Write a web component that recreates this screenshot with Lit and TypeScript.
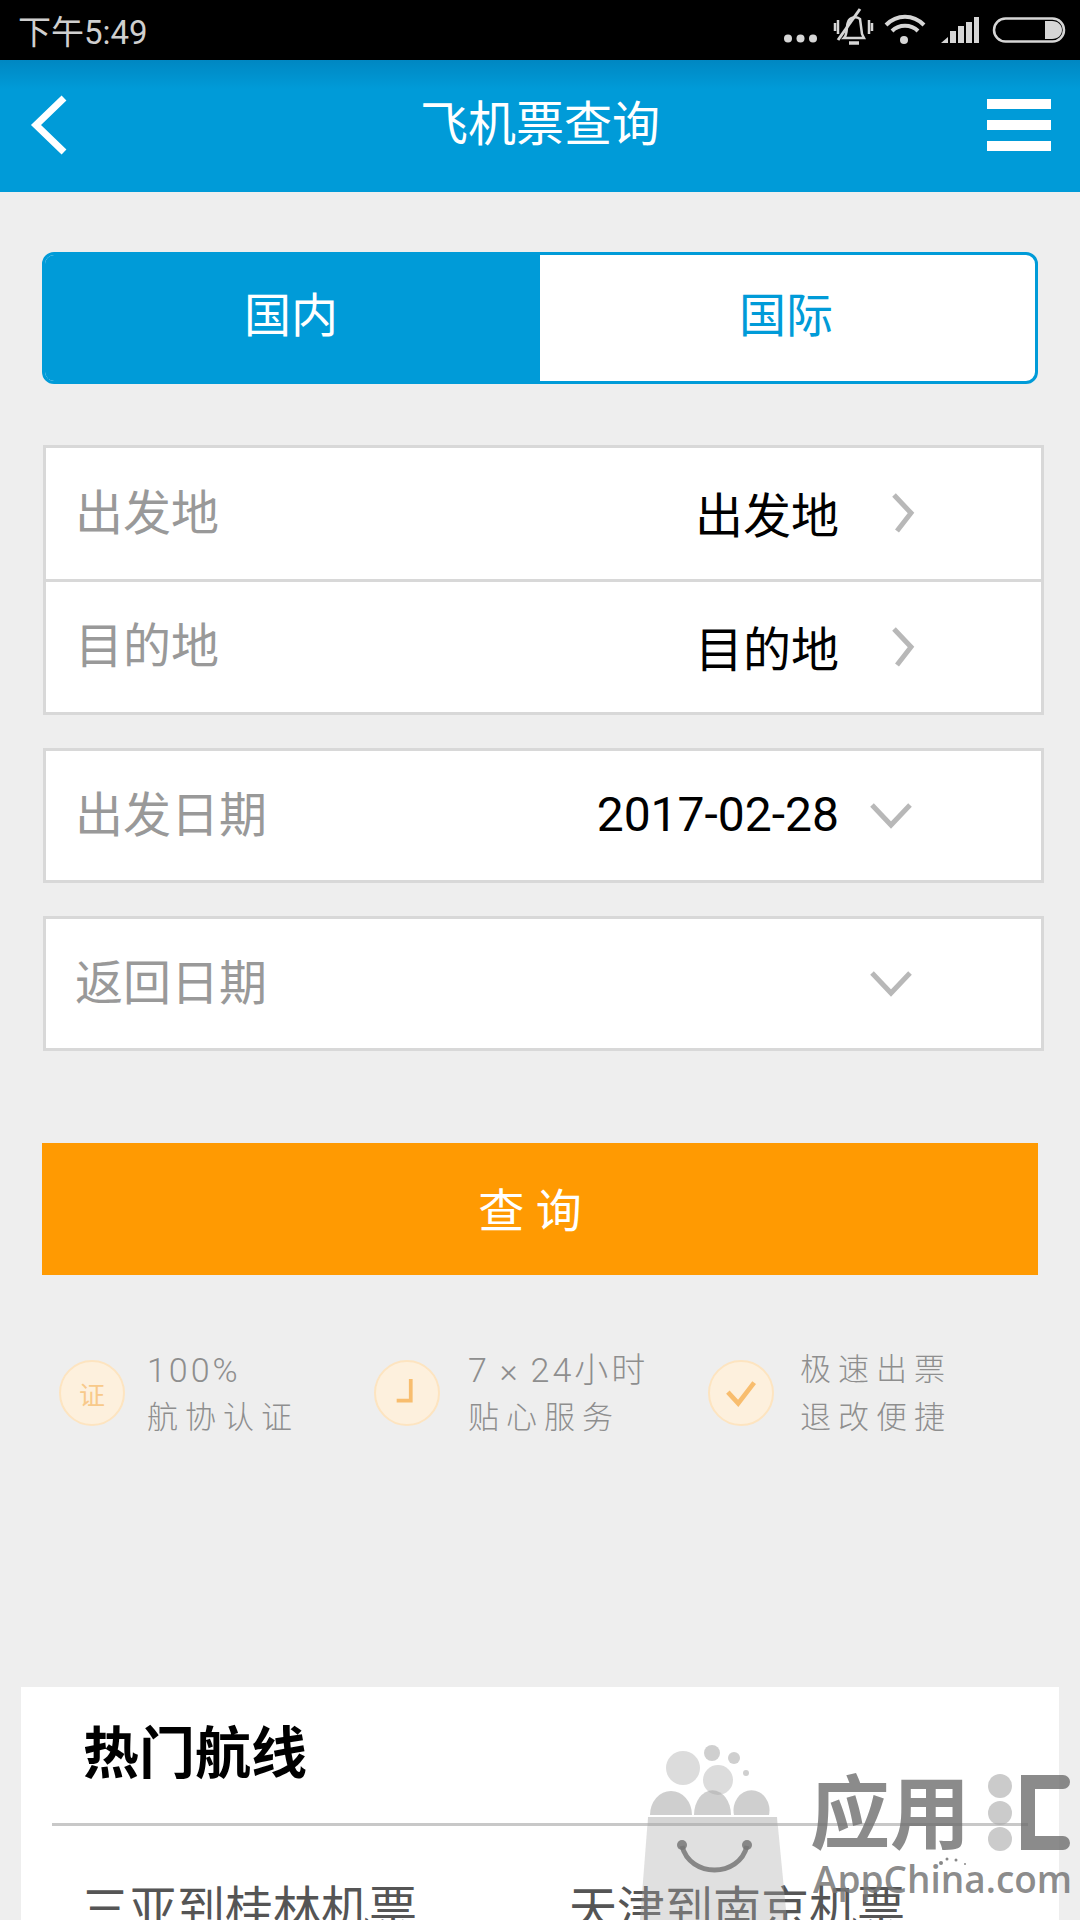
import { LitElement, css, html, svg, type TemplateResult } from 'lit';
import { customElement } from 'lit/decorators.js';
import { classMap } from 'lit/directives/class-map.js';

const chevronRight = html`<svg class="chevron-right" viewBox="0 0 26 42">
  <path d="M4 3 L21 21 L7 39" fill="none" stroke="#b8b8b8" stroke-width="5" />
</svg>`;

const chevronDown = html`<svg class="chevron-down" viewBox="0 0 44 28">
  <path d="M3 4 L22 24 L41 4" fill="none" stroke="#b8b8b8" stroke-width="5" />
</svg>`;

const statusIcons = html`<svg class="status-icons" viewBox="760 0 320 60">
  <g fill="#d6d6d6">
    <circle cx="788" cy="38.500" r="4" />
    <circle cx="800.500" cy="38.500" r="4" />
    <circle cx="813" cy="38.500" r="4" />
  </g>
  <g fill="none" stroke="#d6d6d6" stroke-width="2.500">
    <path d="M844 38 C848 34 846 26 848 22 C850 17 856 16 860 19 L862 34 L864 38 Z" />
    <path d="M838 20 V34 M835 23 V31 M869 20 V34 M872 23 V31" />
    <path d="M838 40 L860 9" stroke-width="3" />
    <path d="M849 43 H859" stroke-width="3.500" />
  </g>
  <g fill="none" stroke="#d6d6d6" stroke-width="4">
    <path d="M886 25 C897 14 913 14 924 25" />
    <path d="M892 31 C899 24 911 24 918 31" />
  </g>
  <circle cx="904" cy="40" r="4" fill="#d6d6d6" />
  <g fill="#d6d6d6">
    <path d="M941 43 L948 37 V43 Z" />
    <rect x="950" y="31" width="6" height="12" />
    <rect x="958" y="26" width="6" height="17" />
    <rect x="966" y="22" width="6" height="21" />
    <rect x="974" y="17" width="5" height="26" />
  </g>
  <rect x="994" y="18.500" width="70" height="23" rx="11.500" fill="none" stroke="#d6d6d6" stroke-width="2.500" />
  <path d="M1045 21 H1052 C1058 21 1062 25 1062 30 C1062 35 1058 39 1052 39 H1045 Z" fill="#d6d6d6" />
</svg>`;

// the market's stamp, laid over the lower right corner of the screenshot
const watermark = svg`
  <path d="M648 1817 H777 L787 1920 H640 Z" fill="#a8a8a8" fill-opacity="0.36" />
  <rect x="648" y="1817" width="129" height="9" fill="#a8a8a8" fill-opacity="0.18" />
  <g fill="#a8a8a8" fill-opacity="0.4">
    <circle cx="683" cy="1768" r="17" />
    <circle cx="718" cy="1780" r="15" />
  </g>
  <g fill="#a8a8a8" fill-opacity="0.55">
    <path d="M650 1815 A21 24 0 1 1 692 1815 Z" />
    <path d="M694 1815 A18 24 0 1 1 731 1815 Z" />
    <path d="M734 1815 A18 20 0 1 1 769 1815 Z" />
    <circle cx="712" cy="1753" r="8" />
    <circle cx="734" cy="1758" r="6" />
    <circle cx="746" cy="1773" r="3" />
  </g>
  <path d="M682 1846 C690 1878 739 1878 747 1846" fill="none" stroke="#777" stroke-opacity="0.85" stroke-width="5" />
  <circle cx="682" cy="1845" r="5" fill="#777" fill-opacity="0.85" />
  <circle cx="747" cy="1845" r="5" fill="#777" fill-opacity="0.85" />
  <text class="mark-cn" x="810" y="1842">应用</text>
  <g fill="#a8a8a8" fill-opacity="0.6">
    <circle cx="1000" cy="1786" r="12" />
    <circle cx="1000" cy="1813" r="12" />
    <circle cx="1000" cy="1839" r="12" />
  </g>
  <path d="M1063 1782 H1028 V1843 H1063" fill="none" stroke="#6e6e6e" stroke-opacity="0.8" stroke-width="14" stroke-linecap="round" />
  <text class="mark-en" x="813" y="1893">AppChina.com</text>
  <g fill="#888">
    <circle cx="941" cy="1863" r="2" />
    <circle cx="947" cy="1859" r="1.500" />
    <circle cx="956" cy="1860" r="1.500" />
    <circle cx="965" cy="1864" r="1" />
  </g>
`;

interface Feature {
  icon: TemplateResult;
  lines: [string, string];
  tight?: boolean;
}

const features: Feature[] = [
  { icon: html`<span class="badge-text">证</span>`, lines: ['100%', '航协认证'], tight: true },
  {
    icon: html`<svg viewBox="0 0 66 66" class="badge-icon">
      <path d="M37 18 V41 H22" fill="none" stroke="#f8bd6e" stroke-width="4" />
    </svg>`,
    lines: ['7\u2009×\u200924小时', '贴心服务'],
    tight: true,
  },
  {
    icon: html`<svg viewBox="0 0 66 66" class="badge-icon">
      <path d="M19 32 L30 44 L47 22" fill="none" stroke="#f8bd6e" stroke-width="5" />
    </svg>`,
    lines: ['极速出票', '退改便捷'],
  },
];

@customElement('app-root')
export class AppRoot extends LitElement {
  private renderRow(label: string, value: string, icon: TemplateResult): TemplateResult {
    return html`<div class="row">
      <span class="label">${label}</span>
      <span class="value">${value}</span>
      <span class="row-icon">${icon}</span>
    </div>`;
  }

  render(): TemplateResult {
    return html`
      <div class="status-bar">
        <span class="time">下午5:49</span>
        ${statusIcons}
      </div>
      <header class="app-bar">
        <div class="bar-side">
          <svg class="back" viewBox="0 0 40 62">
            <path d="M35 4 L7 31 L35 58" fill="none" stroke="#fff" stroke-width="7" />
          </svg>
        </div>
        <h1>飞机票查询</h1>
        <div class="bar-side menu"><i></i><i></i><i></i></div>
      </header>

      <main class="form">
        <div class="tabs">
          <div class="tab active">国内</div>
          <div class="tab">国际</div>
        </div>

        <div class="box first">
          ${this.renderRow('出发地', '出发地', chevronRight)}
          ${this.renderRow('目的地', '目的地', chevronRight)}
        </div>
        <div class="box">${this.renderRow('出发日期', '2017-02-28', chevronDown)}</div>
        <div class="box">${this.renderRow('返回日期', '', chevronDown)}</div>

        <button class="search">查 询</button>

        <div class="features">
          ${features.map(
            (f) => html`<div class="feature">
              <div class="badge">${f.icon}</div>
              <div class="feature-text">
                <div class=${classMap({ tight: !!f.tight })}>${f.lines[0]}</div>
                <div>${f.lines[1]}</div>
              </div>
            </div>`,
          )}
        </div>
      </main>

      <section class="hot">
        <h2>热门航线</h2>
        <div class="routes">
          <span>三亚到桂林机票</span>
          <span>天津到南京机票</span>
        </div>
      </section>

      <svg class="watermark" viewBox="0 0 1080 1920">${watermark}</svg>
    `;
  }

  static styles = css`
    :host {
      display: block;
      position: relative;
      width: 1080px;
      height: 1920px;
      overflow: hidden;
      background: #eeeeee;
      font-family: 'Roboto', 'Noto Sans CJK SC', sans-serif;
    }

    .status-bar {
      height: 60px;
      background: #000;
      display: flex;
      align-items: center;
      justify-content: space-between;
      padding-left: 18px;
    }

    .time {
      font-size: 33px;
      color: #cfcfcf;
    }

    .status-icons {
      width: 320px;
      height: 60px;
    }

    .app-bar {
      height: 132px;
      background: linear-gradient(#0087c2, #009bd8 22%);
      display: flex;
      align-items: center;
      justify-content: space-between;
      padding: 0 29px;
    }

    .app-bar h1 {
      margin: -2px 0 0 0;
      font-size: 48px;
      font-weight: 400;
      color: #fff;
      line-height: 1;
    }

    .bar-side {
      width: 64px;
    }

    .back {
      display: block;
      width: 40px;
      height: 62px;
      margin-top: -2px;
    }

    .menu {
      display: flex;
      flex-direction: column;
      gap: 11px;
      margin-top: -2px;
    }

    .menu i {
      display: block;
      height: 10px;
      background: #fff;
    }

    .form {
      padding: 60px 0 0 42px;
    }

    .tabs {
      width: 996px;
      height: 132px;
      box-sizing: border-box;
      display: flex;
      border: 3px solid #009bd8;
      border-radius: 12px;
      overflow: hidden;
      background: #fff;
    }

    .tab {
      flex: 1;
      display: flex;
      align-items: center;
      justify-content: center;
      padding: 0 3px 14px 0;
      font-size: 47px;
      color: #009bd8;
    }

    .tab.active {
      flex: 0 0 495px;
      box-sizing: border-box;
      background: #009bd8;
      color: #fff;
    }

    .box {
      width: 1001px;
      margin: 33px 0 0 1px;
      box-sizing: border-box;
      border: 3px solid #d8d8d8;
      background: #fff;
    }

    .box.first {
      margin-top: 61px;
    }

    .row {
      height: 129px;
      display: flex;
      align-items: center;
      padding-left: 29px;
    }

    .box.first .row {
      height: 130.5px;
    }

    .row + .row {
      border-top: 3px solid #d8d8d8;
    }

    .label {
      flex: 1;
      font-size: 48px;
      color: #999;
      margin-top: -9px;
    }

    .value {
      font-size: 48px;
      color: #000;
      margin-top: -2px;
    }

    .row-icon {
      width: 202px;
      height: 50px;
      display: flex;
      align-items: center;
      padding-left: 30px;
      box-sizing: border-box;
    }

    .chevron-right {
      width: 26px;
      height: 42px;
      margin-left: 21px;
    }

    .chevron-down {
      width: 44px;
      height: 28px;
      margin-top: -2px;
    }

    .search {
      display: block;
      width: 996px;
      height: 132px;
      margin-top: 92px;
      padding: 0 20px 4px 0;
      border: none;
      background: #ff9a02;
      color: #fff;
      font-family: inherit;
      font-size: 46px;
    }

    .features {
      display: flex;
      height: 326px;
      margin-top: 86px;
      padding-left: 17px;
    }

    .feature {
      display: flex;
      align-items: flex-start;
      gap: 22px;
    }

    .feature:nth-child(1) {
      width: 315px;
    }

    .feature:nth-child(2) {
      width: 334px;
      gap: 28px;
    }

    .feature:nth-child(3) {
      gap: 26px;
    }

    .badge {
      width: 66px;
      height: 66px;
      box-sizing: border-box;
      border: 2px solid #fde4c0;
      border-radius: 50%;
      background: #fdf0dd;
      display: flex;
      align-items: center;
      justify-content: center;
      margin-top: -1px;
    }

    .badge-text {
      font-size: 26px;
      color: #f8c98a;
    }

    .badge-icon {
      width: 62px;
      height: 62px;
    }

    .feature-text {
      font-size: 31px;
      line-height: 48px;
      letter-spacing: 7px;
      font-weight: 300;
      color: #8e8e8e;
      margin-top: -15px;
      white-space: nowrap;
    }

    .feature-text .tight {
      font-size: 34px;
      letter-spacing: 3px;
    }

    .hot {
      margin: 0 21px;
      background: #fff;
      padding: 0 31px;
      height: 300px;
    }

    .hot h2 {
      margin: 0;
      height: 139px;
      padding-left: 31px;
      box-sizing: border-box;
      border-bottom: 3px solid #c8c8c8;
      font-size: 56px;
      font-weight: 700;
      line-height: 134px;
      color: #000;
    }

    .routes {
      display: grid;
      grid-template-columns: 488px 1fr;
      padding: 56px 0 0 29px;
      font-size: 48px;
      line-height: 56px;
      color: #555;
    }

    .watermark {
      position: absolute;
      inset: 0;
      width: 1080px;
      height: 1920px;
      pointer-events: none;
    }

    .mark-cn {
      font-size: 80px;
      font-weight: 700;
      fill: #6e6e6e;
      fill-opacity: 0.8;
    }

    .mark-en {
      font-family: 'Open Sans', sans-serif;
      font-size: 37px;
      font-weight: 600;
      fill: #777;
      fill-opacity: 0.85;
    }
  `;
}

declare global {
  interface HTMLElementTagNameMap {
    'app-root': AppRoot;
  }
}
